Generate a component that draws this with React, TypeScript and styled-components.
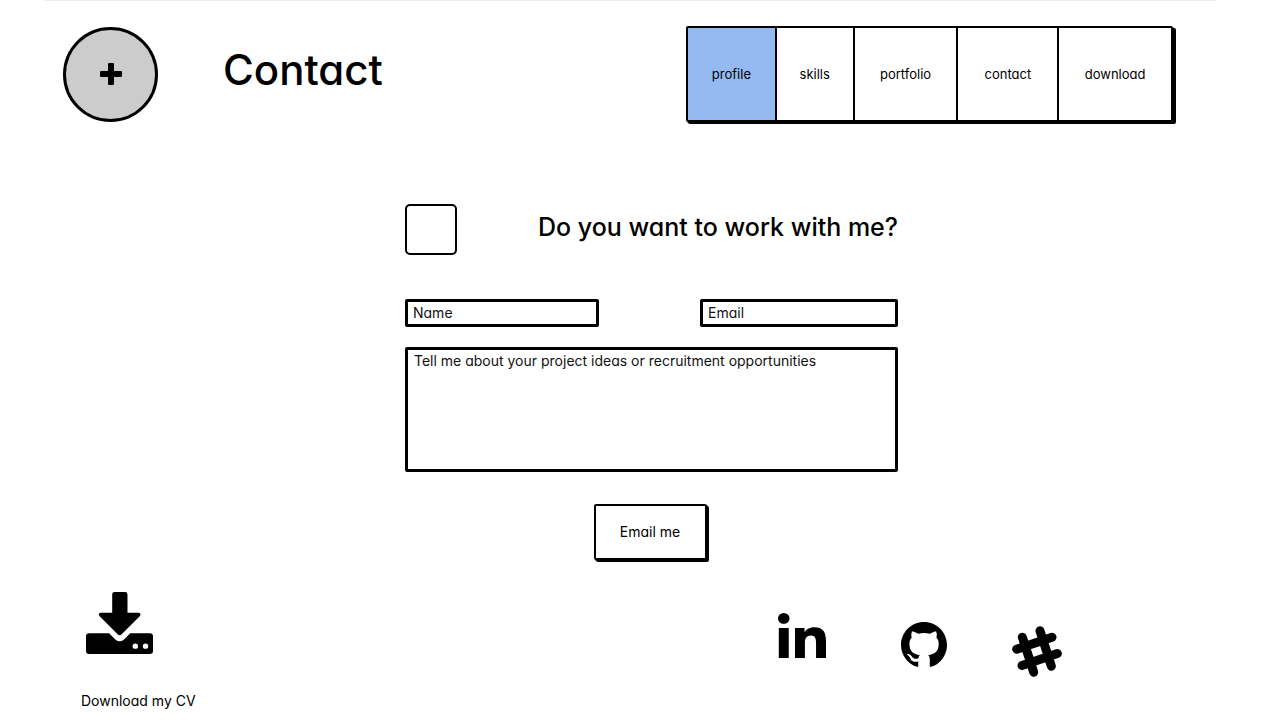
import React from "react";
import styled, { createGlobalStyle } from "styled-components";

const ink = "#000";

const GlobalStyle = createGlobalStyle`
  *, *::before, *::after { box-sizing: border-box; }
  body {
    margin: 0;
    background: #fff;
    color: ${ink};
    font-family: Inter, "Noto Sans", sans-serif;
    font-feature-settings: "cv11";
    font-size: 14px;
    line-height: 20px;
  }
  button, input, textarea { font: inherit; font-feature-settings: inherit; color: inherit; }
  h1 { margin: 0; }
`;

const Page = styled.div`
  display: flex;
  flex-direction: column;
`;

const TopRule = styled.div`
  height: 1px;
  margin: 0 64px 0 44px;
  background: #ececec;
`;

const Header = styled.header`
  display: flex;
  align-items: flex-start;
  padding: 25px 107px 0 63px;
`;

const AddButton = styled.button`
  display: flex;
  align-items: center;
  justify-content: center;
  width: 95px;
  height: 95px;
  margin-top: 1px;
  padding: 0 0 2px;
  border: 3px solid ${ink};
  border-radius: 50%;
  background: #ccc;
`;

const Title = styled.h1`
  margin-left: 65px;
  padding-top: 19px;
  font-size: 42px;
  line-height: 50px;
  font-weight: 500;
`;

const Nav = styled.nav`
  display: grid;
  grid-template-columns: 87fr 78fr 104fr 101fr 114fr;
  width: 487px;
  height: 96px;
  margin-left: auto;
  border: 2px solid ${ink};
  border-radius: 2px;
  box-shadow: 1px 1px 0 ${ink}, 2px 2px 0 ${ink}, 3px 2px 0 ${ink};
  font-size: 13px;
`;

const NavLink = styled.a<{ $active?: boolean }>`
  display: flex;
  align-items: center;
  justify-content: center;
  border-left: 2px solid ${ink};
  background: ${(p) => (p.$active ? "#95b9f1" : "#fff")};
  color: inherit;
  text-decoration: none;

  &:first-child { border-left: 0; }
`;

const Main = styled.main`
  padding: 82px 0 0 23px;
`;

const Form = styled.form`
  display: flex;
  flex-direction: column;
  max-width: 493px;
  margin: 0 auto;
`;

const Row = styled.div`
  display: flex;
  justify-content: space-between;
`;

const CheckBox = styled.input`
  appearance: none;
  width: 52px;
  height: 51px;
  margin: 0;
  border: 2px solid ${ink};
  border-radius: 5px;
  background: #fff;
`;

const Question = styled.label`
  padding-top: 7px;
  font-size: 25px;
  line-height: 32px;
  font-weight: 500;
`;

const Fields = styled(Row)`
  margin: 44px 0 20px;
`;

const TextField = styled.input<{ $width: number }>`
  width: ${(p) => p.$width}px;
  height: 28px;
  padding: 0 5px 2px;
  border: 3px solid ${ink};
  border-radius: 2px;
  background: #fff;

  &::placeholder { color: #111; opacity: 1; }
`;

const Message = styled.textarea`
  display: block;
  width: 100%;
  height: 125px;
  padding: 1px 6px;
  border: 3px solid ${ink};
  border-radius: 2px;
  background: #fff;
  resize: none;

  &::placeholder { color: #111; opacity: 1; }
`;

const SendButton = styled.button`
  align-self: center;
  width: 113px;
  height: 56px;
  margin: 32px 3px 0 0;
  padding: 0;
  border: 2px solid ${ink};
  border-radius: 2px;
  background: #fff;
  box-shadow: 1px 1px 0 ${ink}, 2px 2px 0 ${ink};
`;

const Footer = styled.footer`
  display: flex;
  align-items: flex-start;
  justify-content: space-between;
  padding: 32px 218px 0 81px;
`;

const DownloadLink = styled.a`
  display: flex;
  flex-direction: column;
  gap: 37px;
  color: inherit;
  text-decoration: none;

  svg { margin-left: 5px; }
`;

const Social = styled.div`
  display: grid;
  grid-template-columns: 123px 111px 50px;
  height: 64px;
  margin-top: 21px;
`;

const SocialLink = styled.a<{ $align: "start" | "center" | "end" }>`
  display: flex;
  align-self: ${(p) => p.$align};
  justify-self: start;
  color: inherit;
`;

const links = ["profile", "skills", "portfolio", "contact", "download"];

function PlusIcon() {
  return (
    <svg width="22" height="22" viewBox="0 0 22 22" aria-hidden="true">
      <rect x="0" y="8" width="22" height="6" rx="1" />
      <rect x="8" y="0" width="6" height="22" rx="1" />
    </svg>
  );
}

function DownloadIcon() {
  return (
    <svg width="67" height="62" viewBox="0 0 197 182" aria-hidden="true">
      <path d="M84 0h31q7 0 7 7v54h33q9 2 3 10l-53 53q-6 6-12 0L40 71q-6-8 3-10h34V7q0-7 7-7z" />
      <path
        fillRule="evenodd"
        d="M9 121h59l19 19q12 10 24 0l19-19h58q9 0 9 9v43q0 9-9 9H9q-9 0-9-9v-43q0-9 9-9zM145 151a8 8 0 1 0 0 16 8 8 0 0 0 0-16zM175 151a8 8 0 1 0 0 16 8 8 0 0 0 0-16z"
      />
    </svg>
  );
}

function LinkedinIcon() {
  return (
    <svg width="48" height="45" viewBox="0 0 448 448" preserveAspectRatio="none" aria-hidden="true">
      <path d="M100.28 448H7.4V148.9h92.88zM53.79 108.1C24.09 108.1 0 83.5 0 53.8a53.79 53.79 0 0 1 107.58 0c0 29.7-24.1 54.3-53.79 54.3zM447.9 448h-92.68V302.4c0-34.7-.7-79.2-48.29-79.2-48.29 0-55.69 37.7-55.69 76.7V448h-92.78V148.9h89.08v40.8h1.3c12.4-23.5 42.69-48.3 87.88-48.3 94 0 111.28 61.9 111.28 142.3V448z" />
    </svg>
  );
}

function GithubIcon() {
  return (
    <svg width="46" height="46" viewBox="0 0 16 16" aria-hidden="true">
      <path d="M8 0C3.58 0 0 3.58 0 8c0 3.54 2.29 6.53 5.47 7.59.4.07.55-.17.55-.38 0-.19-.01-.82-.01-1.49-2.01.37-2.53-.49-2.69-.94-.09-.23-.48-.94-.82-1.13-.28-.15-.68-.52-.01-.53.63-.01 1.08.58 1.23.82.72 1.21 1.87.87 2.33.66.07-.52.28-.87.51-1.07-1.78-.2-3.64-.89-3.64-3.95 0-.87.31-1.59.82-2.15-.08-.2-.36-1.02.08-2.12 0 0 .67-.21 2.2.82.64-.18 1.32-.27 2-.27.68 0 1.36.09 2 .27 1.53-1.04 2.2-.82 2.2-.82.44 1.1.16 1.92.08 2.12.51.56.82 1.27.82 2.15 0 3.07-1.87 3.75-3.65 3.95.29.25.54.73.54 1.48 0 1.07-.01 1.93-.01 2.2 0 .21.15.46.55.38A8.013 8.013 0 0 0 16 8c0-4.42-3.58-8-8-8z" />
    </svg>
  );
}

function SlackIcon() {
  return (
    <svg
      width="50"
      height="51"
      viewBox="0 0 150 152"
      fill="none"
      stroke="currentColor"
      strokeWidth="27"
      strokeLinecap="round"
      aria-hidden="true"
    >
      <path d="M31 33L65 138M84 14l34 106M14 69l106-36M30 118l106-36" />
    </svg>
  );
}

export default function App() {
  return (
    <Page>
      <GlobalStyle />
      <TopRule />
      <Header>
        <AddButton type="button" aria-label="Add">
          <PlusIcon />
        </AddButton>
        <Title>Contact</Title>
        <Nav>
          {links.map((name) => (
            <NavLink key={name} href={`#${name}`} $active={name === "profile"}>
              {name}
            </NavLink>
          ))}
        </Nav>
      </Header>
      <Main>
        <Form onSubmit={(e) => e.preventDefault()}>
          <Row>
            <CheckBox type="checkbox" id="work" />
            <Question htmlFor="work">Do you want to work with me?</Question>
          </Row>
          <Fields>
            <TextField $width={194} type="text" placeholder="Name" aria-label="Name" />
            <TextField $width={198} type="email" placeholder="Email" aria-label="Email" />
          </Fields>
          <Message
            placeholder="Tell me about your project ideas or recruitment opportunities"
            aria-label="Tell me about your project ideas or recruitment opportunities"
          />
          <SendButton type="submit">Email me</SendButton>
        </Form>
      </Main>
      <Footer>
        <DownloadLink href="#cv">
          <DownloadIcon />
          <span>Download my CV</span>
        </DownloadLink>
        <Social>
          <SocialLink $align="start" href="#linkedin" aria-label="LinkedIn">
            <LinkedinIcon />
          </SocialLink>
          <SocialLink $align="center" href="#github" aria-label="GitHub">
            <GithubIcon />
          </SocialLink>
          <SocialLink $align="end" href="#slack" aria-label="Slack">
            <SlackIcon />
          </SocialLink>
        </Social>
      </Footer>
    </Page>
  );
}
